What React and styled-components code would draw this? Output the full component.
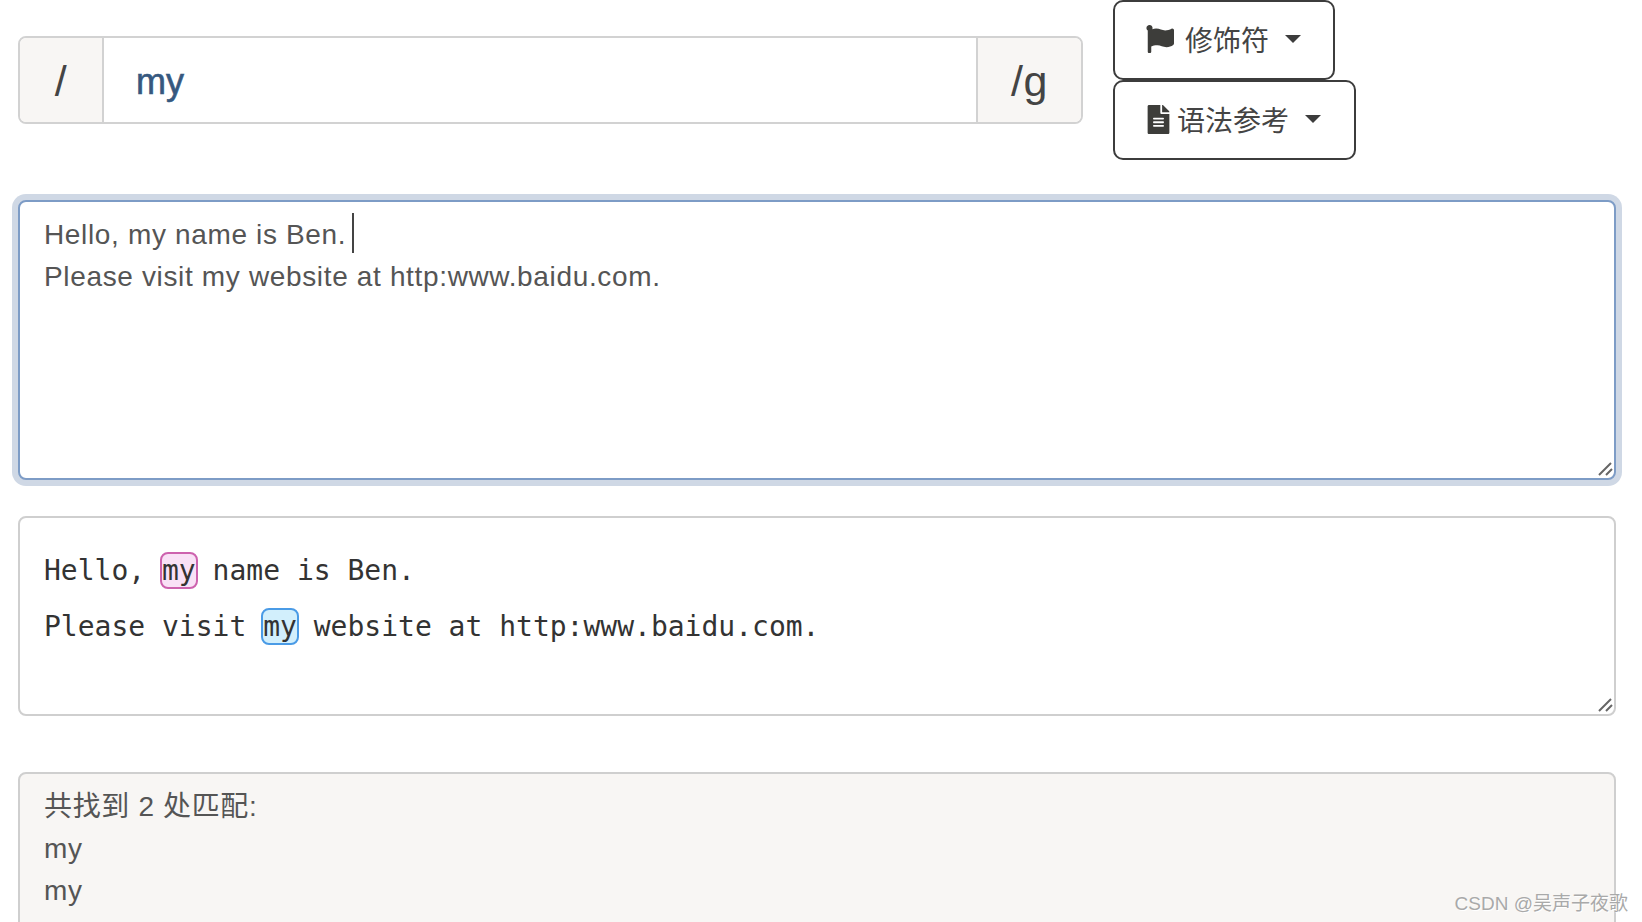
import React from 'react'
import styled, { createGlobalStyle } from 'styled-components'
import { FaFlag, FaFileAlt } from 'react-icons/fa'

const GlobalStyle = createGlobalStyle`
  html, body {
    margin: 0;
    padding: 0;
    background: #fff;
    overflow: hidden;
  }
`

const Page = styled.div`
  position: relative;
  height: 922px;
  overflow: hidden;
  padding-left: 18px;
  box-sizing: border-box;
  font-family: "Liberation Sans", "Noto Sans CJK SC", sans-serif;
  font-size: 28px;
  line-height: 42px;
  letter-spacing: 0.65px;
  color: #555;
`
const Toolbar = styled.div`
  display: flex;
  gap: 30px;
  align-items: flex-start;
  height: 160px;
`
const RegexGroup = styled.div`
  display: flex;
  width: 1065px;
  height: 88px;
  margin-top: 36px;
  box-sizing: border-box;
  border: 2px solid #d2d2d2;
  border-radius: 8px;
  overflow: hidden;
`
const Addon = styled.div`
  width: ${(p) => p.$width}px;
  flex: none;
  background: #f8f6f4;
  font-size: 43px;
  padding-top: 2px;
  box-sizing: border-box;
  color: #444;
  display: flex;
  align-items: center;
  justify-content: center;
  ${(p) => (p.$side === 'left' ? 'border-right' : 'border-left')}: 2px solid #d2d2d2;
`
const RegexInput = styled.div`
  flex: 1;
  padding-left: 32px;
  font-size: 36px;
  font-weight: 500;
  letter-spacing: 0;
  -webkit-text-stroke: 0.6px #36587f;
  color: #36587f;
  line-height: 88px;
`
const MenuColumn = styled.div`
  display: flex;
  flex-direction: column;
  align-items: flex-start;
`
const MenuButton = styled.button`
  height: ${(p) => p.$height}px;
  width: ${(p) => p.$width}px;
  padding: 0 0 2px ${(p) => p.$pad}px;
  box-sizing: border-box;
  background: #fff;
  border: 2px solid #3c3c3c;
  border-radius: 10px;
  display: flex;
  align-items: center;
  font-family: inherit;
  font-size: 28px;
  color: #444;
  svg {
    flex: none;
    color: #3d3d3a;
  }
`
const MenuLabel = styled.span`
  margin-left: ${(p) => p.$gap}px;
`
const Caret = styled.span`
  width: 0;
  height: 0;
  margin-left: 16px;
  border-left: 8px solid transparent;
  border-right: 8px solid transparent;
  border-top: 8px solid #3c3c3c;
`
const Panel = styled.div`
  position: relative;
  width: 1598px;
  box-sizing: border-box;
  height: ${(p) => p.$height}px;
  margin-top: ${(p) => p.$top}px;
  padding: ${(p) => p.$pad};
  border: 2px solid #cfcfcf;
  border-radius: 8px;
  background: ${(p) => p.$bg || '#fff'};
`
const EditorPanel = styled(Panel)`
  border-color: #7d9cc6;
  box-shadow: 0 0 0 6px #cfd8e5;
`
const TextLine = styled.div`
  white-space: pre;
`
const TextCaret = styled.span`
  display: inline-block;
  width: 2px;
  height: 40px;
  margin-left: 6px;
  background: #444;
  vertical-align: -9px;
`
const MonoLine = styled.div`
  font-family: "DejaVu Sans Mono", "Liberation Mono", monospace;
  font-size: 28px;
  line-height: 56px;
  letter-spacing: 0;
  color: #333;
  white-space: pre;
`
const Match = styled.span`
  display: inline-block;
  line-height: 33px;
  border-radius: 8px;
  margin: 0 -2px;
  border: 2px solid ${(p) => (p.$tone === 'pink' ? '#cd62ae' : '#4a9be6')};
  background: ${(p) => (p.$tone === 'pink' ? '#f9e1f6' : '#d2effc')};
`
const Grip = styled.svg`
  position: absolute;
  right: 0;
  bottom: 1px;
  width: 16px;
  height: 16px;
`
const ResultLine = styled.div`
  white-space: pre;
`
const Watermark = styled.div`
  position: absolute;
  right: 14px;
  bottom: 5px;
  font-size: 19px;
  line-height: 26px;
  letter-spacing: 0;
  color: #a9a9a9;
  text-shadow: 1px 1px 0 #fff;
  white-space: nowrap;
`

const ResizeGrip = () => (
  <Grip viewBox="0 0 16 16">
    <path d="M1 14 L13 2 M8 14 L14 8" stroke="#666" strokeWidth="2" fill="none" />
  </Grip>
)

export default function App() {
  return (
    <Page>
      <GlobalStyle />

      <Toolbar>
        <RegexGroup>
          <Addon $width={84} $side="left">/</Addon>
          <RegexInput>my</RegexInput>
          <Addon $width={105} $side="right">/g</Addon>
        </RegexGroup>
        <MenuColumn>
          <MenuButton $width={222} $height={80} $pad={31}>
            <FaFlag size={28} />
            <MenuLabel $gap={11}>修饰符</MenuLabel>
            <Caret />
          </MenuButton>
          <MenuButton $width={243} $height={80} $pad={29}>
            <FaFileAlt size={29} />
            <MenuLabel $gap={4}>语法参考</MenuLabel>
            <Caret />
          </MenuButton>
        </MenuColumn>
      </Toolbar>

      <EditorPanel $height={280} $top={40} $pad="11px 24px">
        <TextLine>Hello, my name is Ben.<TextCaret /></TextLine>
        <TextLine>Please visit my website at http:www.baidu.com.</TextLine>
        <ResizeGrip />
      </EditorPanel>

      <Panel $height={200} $top={36} $pad="25px 24px">
        <MonoLine>Hello, <Match $tone="pink">my</Match> name is Ben.</MonoLine>
        <MonoLine>Please visit <Match $tone="blue">my</Match> website at http:www.baidu.com.</MonoLine>
        <ResizeGrip />
      </Panel>

      <Panel $height={220} $top={56} $pad="12px 24px" $bg="#f8f6f4">
        <ResultLine>共找到 2 处匹配:</ResultLine>
        <ResultLine>my</ResultLine>
        <ResultLine>my</ResultLine>
      </Panel>

      <Watermark>CSDN @吴声子夜歌</Watermark>
    </Page>
  )
}
